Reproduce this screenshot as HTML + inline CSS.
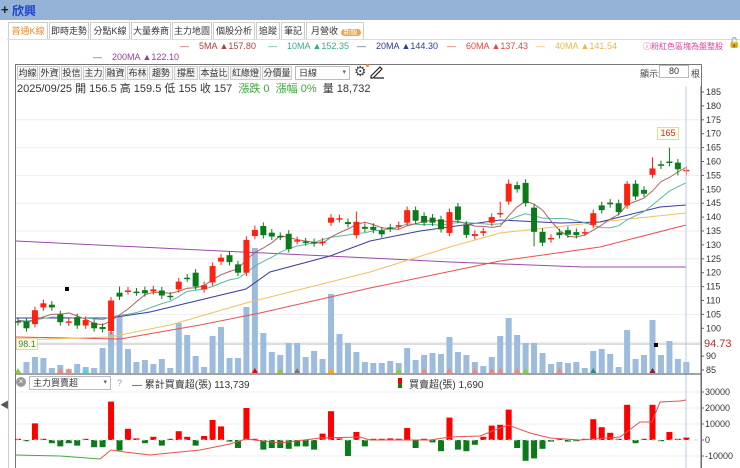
<!DOCTYPE html>
<html><head><meta charset="utf-8">
<style>
*{margin:0;padding:0;box-sizing:border-box}
body{width:740px;height:468px;overflow:hidden;background:#fff;font-family:"Liberation Sans","Noto Sans CJK TC",sans-serif;position:relative;font-size:11px;color:#333}
.abs{position:absolute;white-space:nowrap}
#top{position:absolute;left:0;top:0;width:740px;height:20px;background:#95b3d7}
.tab{position:absolute;top:22px;height:17px;border:1px solid #ccc;border-bottom:none;font-size:9px;line-height:16px;text-align:center;color:#333;background:#fff;white-space:nowrap;overflow:hidden}
.btn{position:absolute;top:66px;height:14px;border:1px solid #ccc;background:#f4f4f4;font-size:9px;line-height:12px;text-align:center;color:#333;white-space:nowrap;overflow:hidden}
</style></head><body>
<div id="top"></div>
<div class="abs" style="left:1px;top:2px;font-size:13px;font-weight:bold;color:#222">+</div>
<div class="abs" style="left:12px;top:2px;font-size:12px;font-weight:bold;color:#1a3fcf">欣興</div>
<div class="abs" style="left:7px;top:39px;width:733px;height:1px;background:#ddd"></div>
<div class="tab" style="left:8px;width:40px;color:#f08a2c">普通K線</div>
<div class="tab" style="left:49px;width:40px">即時走勢</div>
<div class="tab" style="left:90px;width:40px">分點K線</div>
<div class="tab" style="left:131px;width:40px">大量券商</div>
<div class="tab" style="left:172px;width:40px">主力地圖</div>
<div class="tab" style="left:213px;width:42px">個股分析</div>
<div class="tab" style="left:256px;width:24px">追蹤</div>
<div class="tab" style="left:281px;width:24px">筆記</div>
<div class="tab" style="left:306px;width:58px;text-align:left;padding-left:4px">月營收 <span style="background:#f5a34a;color:#fff;border-radius:6px;font-size:7px;padding:0 3px">新版</span></div>
<div class="abs" style="left:8px;top:40px;width:1px;height:428px;background:#ccc"></div>
<div class="abs" style="left:0px;top:398px;font-size:9px;color:#555">◀</div>

<div class="abs" style="left:180px;top:41px;font-size:9px;color:#b04040">—&nbsp;&nbsp;&nbsp; 5MA ▲157.80</div>
<div class="abs" style="left:268px;top:41px;font-size:9px;color:#3aa88c">—&nbsp;&nbsp;&nbsp; 10MA ▲152.35</div>
<div class="abs" style="left:357px;top:41px;font-size:9px;color:#2c3c8c"><span style="color:#555">—</span>&nbsp;&nbsp;&nbsp; 20MA ▲144.30</div>
<div class="abs" style="left:447px;top:41px;font-size:9px;color:#e04848">—&nbsp;&nbsp;&nbsp; 60MA ▲137.43</div>
<div class="abs" style="left:536px;top:41px;font-size:9px;color:#e8b84a">—&nbsp;&nbsp;&nbsp; 40MA ▲141.54</div>
<div class="abs" style="left:643px;top:41px;font-size:8px;color:#e040a0">ⓘ粉紅色區塊為盤整股</div>
<div class="abs" style="left:728px;top:38px;font-size:10px;color:#111">🔓</div>
<div class="abs" style="left:93px;top:52px;font-size:9px;color:#9a3aa0">—&nbsp;&nbsp;&nbsp; 200MA ▲122.10</div>

<div class="abs" style="left:15px;top:64px;width:687px;height:404px;border:1px solid #777;border-bottom:none"></div>
<div class="btn" style="left:17px;width:21px">均線</div>
<div class="btn" style="left:39px;width:21px">外資</div>
<div class="btn" style="left:61px;width:21px">投信</div>
<div class="btn" style="left:83px;width:21px">主力</div>
<div class="btn" style="left:105px;width:21px">融資</div>
<div class="btn" style="left:127px;width:21px">布林</div>
<div class="btn" style="left:149px;width:24px">趨勢</div>
<div class="btn" style="left:174px;width:24px">撐壓</div>
<div class="btn" style="left:199px;width:30px">本益比</div>
<div class="btn" style="left:230px;width:31px">紅綠燈</div>
<div class="btn" style="left:262px;width:30px">分價量</div>
<div class="abs" style="left:295px;top:66px;width:55px;height:14px;border:1px solid #bbb;font-size:9px;line-height:12px;padding-left:3px">日線<span style="position:absolute;right:3px;font-size:7px;color:#666">▾</span></div>
<div class="abs" style="left:354px;top:63px;font-size:14px;color:#444">⚙</div>
<div class="abs" style="left:366px;top:64px;width:3px;height:3px;border-radius:2px;background:#f08a2c"></div>
<svg class="abs" style="left:369px;top:64px" width="16" height="15"><path d="M2 12 L11 3 L13 5 L4 14 L2 14 Z M5 14 H15" stroke="#222" fill="none" stroke-width="1.2"/></svg>
<div class="abs" style="left:640px;top:67px;font-size:9px;color:#444">顯示:</div>
<div class="abs" style="left:659px;top:65px;width:30px;height:13px;border:1px solid #bbb;font-size:9px;text-align:center;line-height:11px">80</div>
<div class="abs" style="left:691px;top:67px;font-size:9px;color:#444">根</div>
<div class="abs" style="left:17px;top:80px;font-size:11px;color:#333">2025/09/25 開 156.5 高 159.5 低 155 收 157 &nbsp;<span style="color:#3aa83a">漲跌 0 &nbsp;漲幅 0%</span> &nbsp;量 18,732</div>

<svg id="ch" class="abs" style="left:0;top:0" width="740" height="468"></svg>

<div class="abs" style="left:16px;top:377px;width:10px;height:10px;border-radius:5px;background:#999;color:#fff;font-size:8px;line-height:10px;text-align:center">×</div>
<div class="abs" style="left:29px;top:376px;width:82px;height:14px;border:1px solid #bbb;background:#fff;font-size:9px;line-height:12px;padding-left:3px">主力買賣超<span style="position:absolute;right:3px;font-size:7px;color:#666">▾</span></div>
<div class="abs" style="left:117px;top:378px;font-size:9px;color:#999">?</div>
<div class="abs" style="left:132px;top:376px;font-size:10px;color:#333">— 累計買賣超(張) 113,739</div>
<div class="abs" style="left:398px;top:378px;width:4px;height:5px;background:#e00"></div>
<div class="abs" style="left:398px;top:383px;width:4px;height:5px;background:#080"></div>
<div class="abs" style="left:409px;top:376px;font-size:10px;color:#333">買賣超(張) 1,690</div>

<div class="abs" style="left:657px;top:127px;width:22px;height:13px;border:1px solid #e8d8a0;background:#fffbe8;font-size:9px;color:#d03030;text-align:center;line-height:11px">165</div>
<div class="abs" style="left:16px;top:338px;width:22px;height:12px;border:1px solid #e8d8a0;background:#fffbe8;font-size:9px;color:#3a8a3a;text-align:center;line-height:10px">98.1</div>
<div class="abs" style="left:704px;top:338px;font-size:11px;color:#b03030">94.73</div>

<script>
(function(){
var s=document.getElementById('ch'),h='';
function Y(p){return 92+(185-p)*2.78;}
var X0=18,DX=8.46;
function xi(i){return X0+i*DX;}
var C=[[102.6,102.2],[102.5,100],[101.5,106.5],[107.5,109],[108.5,107.5],[105,102.2],[102,102.5],[104,101],[101,103],[102,100],[100.5,99.7],[99,110],[112.8,111.4],[113.3,113.6],[113.2,112.9],[113.7,112.6],[113.3,114],[113.6,111.8],[111.7,111.4],[114,116.8],[118.2,117.9],[120,115],[114,115.5],[116.5,122.4],[124,125.4],[126.3,123.8],[123,120],[120,131.8],[133.2,135.4],[136.8,133.5],[134.4,133],[133.2,132.9],[134,128.5],[131.4,131.7],[131.2,130.9],[131,130.5],[130.9,131.2],
[138,139.8],[139.3,139.6],[138.2,137.5],[133.5,138.3],[136.5,135.8],
[136.5,135.4],[135.2,133.8],[136.3,135.8],[136.9,137.1],[138,142.5],[142.5,138.7],[140.4,138],[139.8,138],[139.2,135.6],[134.3,141.8],[143.8,139],[137.2,133.6],[133.2,133.9],[134.3,134.9],[138,140],[141,141.5],[145.6,152],[151.5,150],[152.3,145],[143.4,134.7],[134.7,130.8],[132,132.5],[134.5,133.5],[135.3,133.7],[134.6,133.5],[134.4,134.6],[137.2,141.4],[144.2,142.5],[145.2,144.6],[145,141.8],[144.2,152],[152,147.4],[149.8,148.4],[155.2,157.5],[159,158.5],[160,159.5],[159.6,157.2],[156.8,157]];
var n=C.length;
[175,165,155,145,135,125,115,105,95].forEach(function(p){h+='<line x1="16" x2="701" y1="'+Y(p)+'" y2="'+Y(p)+'" stroke="#eee"/>';});
[392,408,424,456].forEach(function(y){h+='<line x1="16" x2="701" y1="'+y+'" y2="'+y+'" stroke="#eee"/>';});
h+='<line x1="16" x2="701" y1="344" y2="344" stroke="#bbb"/>';
var V=[372,362,357,358,368,365,369,364,367,368,348,332,317,349,362,360,364,359,368,323,335,356,367,336,327,358,358,307,248,333,352,355,343,343,357,351,359,294,334,343,352,362,
363,363,361,363,348,360,355,353,354,337,352,355,362,366,357,336,318,335,343,343,353,364,362,363,362,368,351,349,354,367,330,359,355,320,355,341,359,362];
for(var i=0;i<n;i++){var x=xi(i);h+='<rect x="'+(x-3)+'" y="'+V[i]+'" width="6" height="'+(373-V[i])+'" fill="#9dbbdc"/>';}
[[0,'#8c4'],[5,'#e87'],[6,'#e87'],[8,'#4dd'],[28,'#e00'],[31,'#8c4'],[33,'#777'],[37,'#fa0'],[48,'#e87'],[45,'#8c4'],[51,'#e87'],[54,'#e87'],[56,'#e87'],[57,'#e87'],[59,'#e87'],[60,'#8c4'],[64,'#e87'],[68,'#388'],[75,'#822']].forEach(function(t){var x=xi(t[0]);h+='<path d="M'+(x-3)+' 373 L'+x+' 368 L'+(x+3)+' 373Z" fill="'+t[1]+'"/>';});
function pl(pts,col){h+='<polyline fill="none" stroke="'+col+'" stroke-width="1" points="'+pts.map(function(p){return p[0]+','+p[1]}).join(' ')+'"/>';}
pl([[16,241],[200,250],[370,258],[450,262],[583,267],[686,267]],'#9a4aa8');
pl([[16,337],[120,339],[200,325],[260,313],[370,288],[500,261],[600,247],[686,225]],'#e85050');
pl([[16,340],[110,337],[170,325],[246,303],[370,272],[450,247],[500,233],[600,222],[686,213]],'#f0c060');
pl([[16,318],[110,318],[150,312],[246,289],[270,272],[330,256],[370,241],[420,231],[500,220],[560,223],[600,222],[660,207],[686,205]],'#3a3aa0');
function ma(k,col,pre){var pts=[];for(var i=0;i<n;i++){var s2=0,m=0;for(var j=Math.max(0,i-k+1);j<=i;j++){s2+=C[j][1];m++;}s2+=pre*(k-m);pts.push([xi(i).toFixed(1),Y(s2/k).toFixed(1)]);}pl(pts,col);}
ma(10,'#5ab8a0',103);ma(5,'#b06060',103);
var hi={77:165,58:153.5,57:145.5,12:115,28:137,75:161.5,40:142,72:153};
var lo={61:129.5,79:155,78:155};
for(var i=0;i<n;i++){var o=C[i][0],c=C[i][1],x=xi(i),up=c>=o,col=up?'#f21':'#0a7a1a';var tp=Math.max(o,c),bt=Math.min(o,c);var H=hi[i]||tp+1.3,L=lo[i]||bt-1.2;
h+='<line x1="'+x+'" x2="'+x+'" y1="'+Y(H)+'" y2="'+Y(L)+'" stroke="'+col+'"/>';
var bh=Math.max(1.5,(tp-bt)*2.78);h+='<rect x="'+(x-3)+'" y="'+Y(tp)+'" width="6" height="'+bh+'" fill="'+col+'"/>';}
h+='<rect x="65" y="287" width="4" height="4" fill="#000"/><rect x="654" y="343" width="4" height="4" fill="#000"/>';
h+='<line x1="686" x2="686" y1="86" y2="468" stroke="#b8cce4"/>';
h+='<line x1="701" x2="701" y1="86" y2="468" stroke="#666"/><line x1="16" x2="701" y1="374" y2="374" stroke="#444"/>';
for(var p=185;p>=85;p-=5){var y=Y(p);if(Math.abs(y-344)<5)continue;h+='<line x1="701" x2="704" y1="'+y+'" y2="'+y+'" stroke="#666"/><text x="706" y="'+(y+3)+'" font-size="9" fill="#333" font-family="Liberation Sans">'+p+'</text>';}
[[392,'30000'],[408,'20000'],[424,'10000'],[440,'0'],[456,'-10000']].forEach(function(a){h+='<line x1="701" x2="704" y1="'+a[0]+'" y2="'+a[0]+'" stroke="#666"/><text x="705" y="'+(a[0]+3)+'" font-size="9" fill="#333" font-family="Liberation Sans">'+a[1]+'</text>';});
var B=[0,-300,10400,300,-2000,-4000,-2000,-3500,0,-4500,-4500,24000,-6500,7000,1000,-2000,2000,-3500,0,5500,2000,-3500,2500,12500,8500,-1000,-5000,20000,0,-6000,-5000,-5000,-5500,-4000,-4000,-6000,4000,18000,1000,-10000,5000,-4000,
0,500,1000,800,7500,-5000,200,-1500,-7000,14000,-6000,-7000,-3000,2000,9000,9500,19000,-5000,-13000,-11500,-5500,-1000,0,-1000,-500,500,13000,8000,4500,200,22000,-2000,0,22000,-500,5000,0,1500];
for(var i=0;i<n;i++){var v=B[i],x=xi(i),hh=Math.abs(v)*0.0016;if(hh<1.2)hh=1.2;var col=v>=0?'#f00':'#0a7a1a';h+='<rect x="'+(x-3)+'" y="'+(v>=0?440-hh:440)+'" width="6" height="'+hh+'" fill="'+col+'"/>';}
h+='<line x1="16" x2="701" y1="440" y2="440" stroke="#ddd" stroke-dasharray="3,3"/>';
pl([[16,455],[60,456],[100,459]],'#4a4');
pl([[100,459],[111,450],[125,452],[150,455],[200,450],[230,444],[246,439],[280,443],[320,438],[360,437],[370,440],[430,440],[450,437],[480,436],[508,425],[530,433],[550,438],[580,440],[620,437],[640,422],[652,422],[660,402],[680,401],[686,400]],'#e85050');
s.innerHTML=h;
})();
</script>
</body></html>
